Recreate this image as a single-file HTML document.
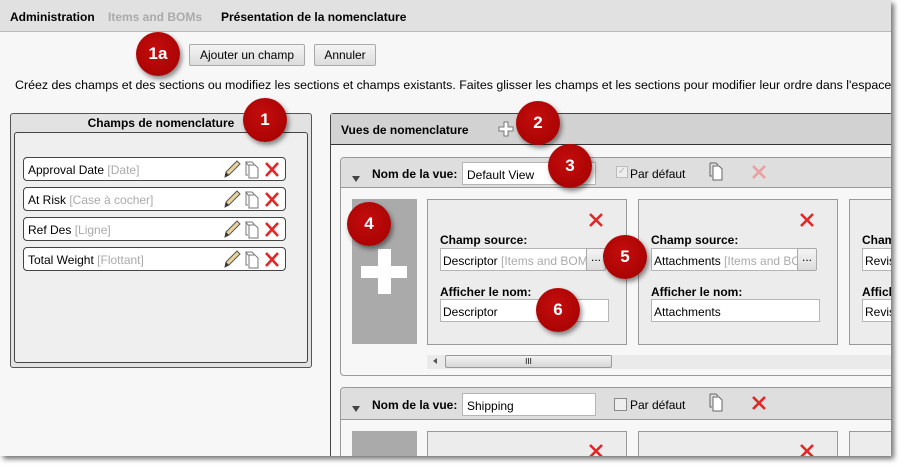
<!DOCTYPE html>
<html><head><meta charset="utf-8"><style>
*{box-sizing:border-box;margin:0;padding:0}
html,body{width:905px;height:470px;overflow:hidden}
body{background:#fff;font-family:"Liberation Sans",Arial,sans-serif;font-size:12px;color:#000;position:relative}
.frame{position:absolute;left:0;top:0;width:891px;height:456px;background:#f7f7f7;overflow:hidden;box-shadow:3px 3px 5px rgba(0,0,0,.55)}
.a{position:absolute}
.nav{left:0;top:0;width:891px;height:32px;background:#e1e1e1;border-bottom:1px solid #b9b9b9}
.nav span{position:absolute;top:10px;font-weight:bold;font-size:12px}
.btn{height:22px;border:1px solid #a9a9a9;background:linear-gradient(#f4f4f4,#dcdcdc);font-size:12px;line-height:20px;text-align:center;border-radius:2px}
.badge{width:44px;height:44px;border-radius:50%;background:radial-gradient(circle at 45% 40%,#c40d0d,#a00000);color:#fff;font-weight:bold;font-size:17px;line-height:44px;text-align:center;box-shadow:2px 3px 5px rgba(0,0,0,.45);z-index:5}
.row{left:23px;width:263px;height:24px;border:1px solid #444;border-radius:4px;background:#fff;padding:5px 4px;font-size:12px}
.row i{font-style:normal;color:#aaa}
.lbl{font-weight:bold;font-size:12px;white-space:nowrap}
.inp{background:#fff;border:1px solid #b5b5b5;height:23px;padding:5px 4px;font-size:12px;white-space:nowrap;overflow:hidden}
.card{width:200px;height:146px;border:1px solid #999;background:#ececec}
</style></head><body>
<div class="frame">
<div class="a nav"><span style="left:10px">Administration</span><span style="left:108px;color:#aaa">Items and BOMs</span><span style="left:221px">Présentation de la nomenclature</span></div>
<div class="a btn" style="left:189px;top:44px;width:116px">Ajouter un champ</div>
<div class="a btn" style="left:314px;top:44px;width:62px">Annuler</div>
<div class="a badge" style="left:136px;top:32px">1a</div>
<div class="a" style="left:15px;top:78px;white-space:nowrap;font-size:12.4px">Créez des champs et des sections ou modifiez les sections et champs existants. Faites glisser les champs et les sections pour modifier leur ordre dans l'espace</div>

<div class="a" style="left:10px;top:113px;width:302px;height:255px;border:1px solid #555;border-radius:3px;background:#e2e2e2"></div>
<div class="a lbl" style="left:10px;top:116px;width:302px;text-align:center">Champs de nomenclature</div>
<div class="a" style="left:14px;top:132px;width:294px;height:231px;border:1px solid #444;border-radius:3px;background:#efefef"></div>
<div class="a badge" style="left:243px;top:98px">1</div>
<div class="a row" style="top:157px">Approval Date <i>[Date]</i></div>
<div class="a row" style="top:187px">At Risk <i>[Case à cocher]</i></div>
<div class="a row" style="top:217px">Ref Des <i>[Ligne]</i></div>
<div class="a row" style="top:247px">Total Weight <i>[Flottant]</i></div>
<svg class="a" style="left:222px;top:157px" width="62" height="120">
<g id="ic">
<path d="M3 20 L4 15 L15 4 L18 7 L7 18 Z" fill="#e8d39a" stroke="#555" stroke-width="1"/>
<path d="M3 20 L4 15 L7 18Z" fill="#333"/>
<path d="M24 5 h6 l2 2 v1 h-6z M24 5 v13 h2" fill="none" stroke="#777"/>
<path d="M27 8 h6 l3 3 v10 h-9z" fill="#fff" stroke="#777"/>
<path d="M44 6 L56 19 M56 6 L44 19" stroke="#e02828" stroke-width="2.6"/>
</g>
<use href="#ic" y="30"/><use href="#ic" y="60"/><use href="#ic" y="90"/>
</svg>

<div class="a" style="left:330px;top:113px;width:570px;height:350px;border:1px solid #444;border-radius:3px;background:#f7f7f7"></div>
<div class="a" style="left:331px;top:114px;width:570px;height:31px;background:#d2d2d2;border-bottom:1px solid #333"></div>
<div class="a lbl" style="left:341px;top:123px">Vues de nomenclature</div>
<svg class="a" style="left:498px;top:121px" width="16" height="16"><path d="M6 1h4v5h5v4h-5v5h-4v-5h-5v-4h5z" fill="#fff" stroke="#777"/></svg>
<div class="a badge" style="left:516px;top:101px">2</div>

<div class="a" style="left:340px;top:157px;width:560px;height:219px;border:1px solid #999;border-radius:4px;background:#f7f7f7"></div>
<div class="a" style="left:341px;top:158px;width:560px;height:30px;background:#dedede;border-bottom:1px solid #999;border-radius:4px 0 0 0"></div>
<div class="a" style="left:352px;top:176px;border:4px solid transparent;border-top:6px solid #444"></div>
<div class="a lbl" style="left:372px;top:167px">Nom de la vue:</div>
<div class="a inp" style="left:462px;top:162px;width:134px">Default View</div>
<div class="a" style="left:616px;top:166px;width:12px;height:12px;border:1px solid #bbb;background:#eee;color:#bbb;font-size:10px;line-height:10px;text-align:center">✓</div>
<div class="a" style="left:630px;top:167px">Par défaut</div>
<svg class="a" style="left:708px;top:162px" width="20" height="20"><path d="M2 1 h6 l2 2 M2 1 v13 h2" fill="none" stroke="#666"/><path d="M5 4 h6 l3 3 v11 h-9z" fill="#fff" stroke="#666"/></svg>
<svg class="a" style="left:751px;top:164px" width="16" height="16"><path d="M2 2 L14 14 M14 2 L2 14" stroke="#e9a0a0" stroke-width="2.6"/></svg>
<div class="a badge" style="left:548px;top:144px">3</div>

<div class="a" style="left:352px;top:199px;width:65px;height:145px;background:#aaa"></div>
<div class="a" style="left:361px;top:266px;width:46px;height:12px;background:#fff"></div>
<div class="a" style="left:378px;top:249px;width:13px;height:45px;background:#fff"></div>
<div class="a badge" style="left:347px;top:202px">4</div>

<div class="a card" style="left:427px;top:199px"></div>
<div class="a card" style="left:638px;top:199px"></div>
<div class="a card" style="left:849px;top:199px"></div>
<svg class="a" style="left:588px;top:212px" width="240" height="16"><g id="rx"><path d="M2 2 L14 14 M14 2 L2 14" stroke="#e02828" stroke-width="2.6"/></g><use href="#rx" x="211"/></svg>
<div class="a lbl" style="left:440px;top:233px">Champ source:</div>
<div class="a lbl" style="left:651px;top:233px">Champ source:</div>
<div class="a lbl" style="left:862px;top:233px">Champ</div>
<div class="a inp" style="left:440px;top:248px;width:147px;padding-left:2px">Descriptor <span style="color:#aaa">[Items and BOMs]</span></div>
<div class="a btn" style="left:586px;top:248px;width:20px;height:23px;line-height:17px">...</div>
<div class="a inp" style="left:651px;top:248px;width:147px;padding-left:2px">Attachments <span style="color:#aaa">[Items and BOMs]</span></div>
<div class="a btn" style="left:797px;top:248px;width:20px;height:23px;line-height:17px">...</div>
<div class="a inp" style="left:862px;top:248px;width:100px;padding-left:2px">Revision</div>
<div class="a badge" style="left:603px;top:235px">5</div>
<div class="a lbl" style="left:440px;top:285px">Afficher le nom:</div>
<div class="a lbl" style="left:651px;top:285px">Afficher le nom:</div>
<div class="a lbl" style="left:862px;top:285px">Afficher le nom:</div>
<div class="a inp" style="left:440px;top:299px;width:169px;padding-left:2px">Descriptor</div>
<div class="a inp" style="left:651px;top:299px;width:169px;padding-left:2px">Attachments</div>
<div class="a inp" style="left:862px;top:299px;width:100px;padding-left:2px">Revision</div>
<div class="a badge" style="left:536px;top:288px">6</div>

<div class="a" style="left:427px;top:355px;width:480px;height:14px;background:#eaeaea"></div>
<div class="a" style="left:430px;top:358px;border:3px solid transparent;border-right:4px solid #555"></div>
<div class="a" style="left:445px;top:355px;width:167px;height:13px;border:1px solid #999;border-radius:2px;background:linear-gradient(#f2f2f2,#d6d6d6);font-size:8px;text-align:center;line-height:11px">III</div>

<div class="a" style="left:340px;top:387px;width:560px;height:90px;border:1px solid #999;border-radius:4px;background:#f7f7f7"></div>
<div class="a" style="left:341px;top:388px;width:560px;height:32px;background:#dedede;border-bottom:1px solid #999;border-radius:4px 0 0 0"></div>
<div class="a" style="left:352px;top:406px;border:4px solid transparent;border-top:6px solid #444"></div>
<div class="a lbl" style="left:372px;top:398px">Nom de la vue:</div>
<div class="a inp" style="left:462px;top:393px;width:134px">Shipping</div>
<div class="a" style="left:614px;top:398px;width:13px;height:13px;border:1px solid #888;background:#eee"></div>
<div class="a" style="left:630px;top:398px">Par défaut</div>
<svg class="a" style="left:708px;top:393px" width="20" height="20"><path d="M2 1 h6 l2 2 M2 1 v13 h2" fill="none" stroke="#666"/><path d="M5 4 h6 l3 3 v11 h-9z" fill="#fff" stroke="#666"/></svg>
<svg class="a" style="left:751px;top:395px" width="16" height="16"><path d="M2 2 L14 14 M14 2 L2 14" stroke="#e02828" stroke-width="2.6"/></svg>
<div class="a" style="left:352px;top:431px;width:65px;height:40px;background:#aaa"></div>
<div class="a card" style="left:427px;top:431px"></div>
<div class="a card" style="left:638px;top:431px"></div>
<div class="a card" style="left:849px;top:431px"></div>
<svg class="a" style="left:588px;top:443px" width="240" height="16"><use href="#rx"/><use href="#rx" x="211"/></svg>
</div>
</body></html>
